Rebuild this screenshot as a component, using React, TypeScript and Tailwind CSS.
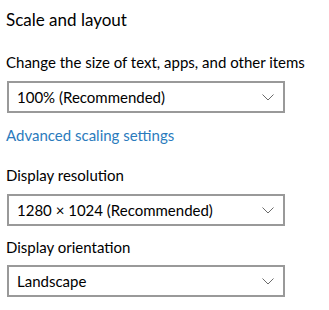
import React from 'react';

const Chevron = () => (
    <svg width="12" height="7" viewBox="0 0 12 7" fill="none">
        <polyline points="0.5,0.5 6,6 11.5,0.5" stroke="#6b6b6b" strokeWidth="1" />
    </svg>
);

function Dropdown({ value }: { value: string }) {
    return (
        <div className="ml-[7px] w-[278px] h-[32px] border-2 border-[#999999] flex items-center justify-between pl-[8px] pr-[9px] text-[15px] leading-[20px] text-black">
            <span className="whitespace-nowrap">{value}</span>
            <Chevron />
        </div>
    );
}

export default function App() {
    return (
        <div className="w-[329px] h-[310px] bg-white px-[6px] font-['Lato',sans-serif] text-black whitespace-nowrap">
            <div className="pt-[8px] h-[32px] text-[17px] leading-[24px]">Scale and layout</div>

            <div className="mt-[20px] h-[20px] text-[15px] leading-[20px]">Change the size of text, apps, and other items</div>
            <div className="mt-[9px] -ml-[6px]">
                <Dropdown value="100% (Recommended)" />
            </div>

            <div className="mt-[12px] h-[20px] text-[15px] leading-[20px] text-[#2b7bbd]">Advanced scaling settings</div>

            <div className="mt-[20px] h-[20px] text-[15px] leading-[20px]">Display resolution</div>
            <div className="mt-[9px] -ml-[6px]">
                <Dropdown value="1280 × 1024 (Recommended)" />
            </div>

            <div className="mt-[11px] h-[20px] text-[15px] leading-[20px]">Display orientation</div>
            <div className="mt-[8px] -ml-[6px]">
                <Dropdown value="Landscape" />
            </div>
        </div>
    );
}
